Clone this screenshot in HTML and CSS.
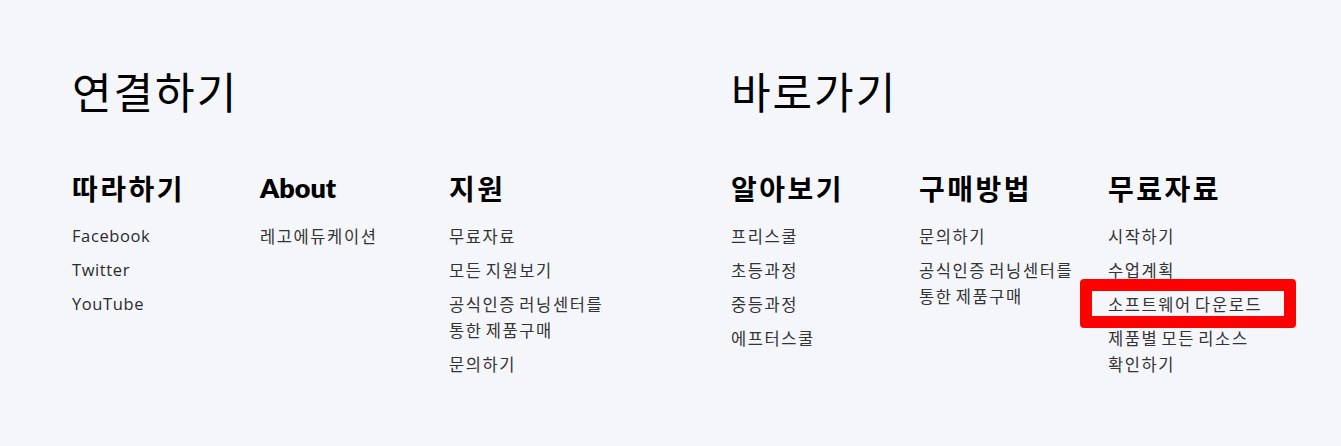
FILE: index.html
```html
<!DOCTYPE html>
<html lang="ko">
<head>
<meta charset="utf-8">
<title>Footer</title>
<link rel="stylesheet" href="styles.css">
</head>
<body>
<footer class="footer">
  <section class="group">
    <h1 class="group-title">연결하기</h1>
    <div class="cols">
      <div class="col">
        <h2 class="col-title">따라하기</h2>
        <ul class="links latin">
          <li>Facebook</li>
          <li>Twitter</li>
          <li>YouTube</li>
        </ul>
      </div>
      <div class="col">
        <h2 class="col-title latin-title">About</h2>
        <ul class="links">
          <li>레고에듀케이션</li>
        </ul>
      </div>
      <div class="col">
        <h2 class="col-title">지원</h2>
        <ul class="links">
          <li>무료자료</li>
          <li>모든 지원보기</li>
          <li>공식인증 러닝센터를<br>통한 제품구매</li>
          <li>문의하기</li>
        </ul>
      </div>
    </div>
  </section>
  <section class="group">
    <h1 class="group-title">바로가기</h1>
    <div class="cols">
      <div class="col">
        <h2 class="col-title">알아보기</h2>
        <ul class="links">
          <li>프리스쿨</li>
          <li>초등과정</li>
          <li>중등과정</li>
          <li>에프터스쿨</li>
        </ul>
      </div>
      <div class="col">
        <h2 class="col-title">구매방법</h2>
        <ul class="links">
          <li>문의하기</li>
          <li>공식인증 러닝센터를<br>통한 제품구매</li>
        </ul>
      </div>
      <div class="col">
        <h2 class="col-title">무료자료</h2>
        <ul class="links">
          <li>시작하기</li>
          <li>수업계획</li>
          <li class="marked">소프트웨어 다운로드<span class="mark"></span></li>
          <li>제품별 모든 리소스<br>확인하기</li>
        </ul>
      </div>
    </div>
  </section>
</footer>
</body>
</html>
```

FILE: styles.css
```css
html, body {
  margin: 0;
  padding: 0;
  background: #f5f6fa;
}

body {
  font-family: "Noto Sans CJK KR", "Noto Sans", sans-serif;
  color: #000;
}

.footer {
  display: flex;
  padding: 62px 0 0 72px;
  gap: 94px;
}

.group {
  width: 565px;
}

.group-title {
  margin: 0;
  font-size: 43px;
  line-height: 56px;
  font-weight: 400;
  letter-spacing: 2px;
}

.cols {
  display: grid;
  grid-template-columns: 188px 189px 188px;
  margin-top: 52px;
}

.col-title {
  margin: 0;
  font-size: 28px;
  line-height: 36px;
  font-weight: 700;
  letter-spacing: 2.5px;
}

.latin-title {
  font-family: "Lato", "Noto Sans", sans-serif;
  font-weight: 800;
  font-size: 27px;
  letter-spacing: 0;
}

.links {
  list-style: none;
  margin: 17px 0 0;
  padding: 0;
  display: flex;
  flex-direction: column;
  gap: 8px;
}

.links li {
  font-size: 16.5px;
  line-height: 26px;
  color: #333;
  letter-spacing: 1.6px;
  word-spacing: -3px;
  white-space: nowrap;
}

.links.latin li {
  font-family: "Open Sans", "Lato", sans-serif;
  font-size: 16.5px;
  color: #2a2a2a;
  letter-spacing: 0.6px;
  word-spacing: 0;
}

.marked {
  position: relative;
}

.mark {
  position: absolute;
  left: -28px;
  top: -12px;
  width: 216px;
  height: 49px;
  box-sizing: border-box;
  border: 12px solid #ff0000;
  border-radius: 4px;
}
```
